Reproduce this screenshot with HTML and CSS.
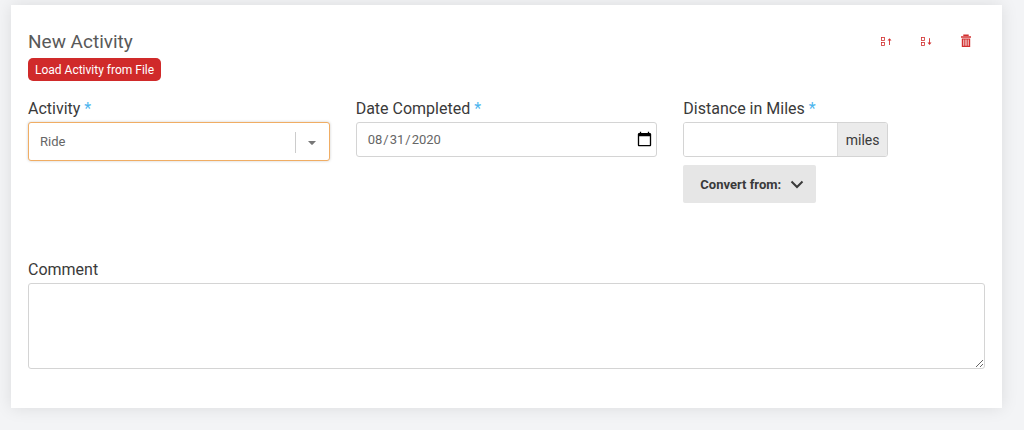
FILE: index.html
```html
<!DOCTYPE html>
<html lang="en">
<head>
<meta charset="utf-8">
<meta name="viewport" content="width=device-width, initial-scale=1">
<title>New Activity</title>
<link rel="stylesheet" href="styles.css">
</head>
<body>
<form class="card">
  <header class="card-header">
    <div class="heading">
      <h1 class="title">New Activity</h1>
      <button type="button" class="load-button">Load Activity from File</button>
    </div>
    <div class="actions">
      <button type="button" class="icon-button" aria-label="Move up">
        <svg width="14" height="12" viewBox="0 0 14 12" fill="none" stroke="currentColor" aria-hidden="true">
          <rect x="2.5" y="2.5" width="3" height="3" stroke-width=".8"/>
          <rect x="2.5" y="7.5" width="3" height="3" stroke-width=".8"/>
          <path d="M10.5 10V5" stroke-width=".9"/>
          <path d="M8.5 5.6l2-2.4 2 2.4z" fill="currentColor" stroke="none"/>
        </svg>
      </button>
      <button type="button" class="icon-button" aria-label="Move down">
        <svg width="14" height="12" viewBox="0 0 14 12" fill="none" stroke="currentColor" aria-hidden="true">
          <rect x="2.5" y="2.5" width="3" height="3" stroke-width=".8"/>
          <rect x="2.5" y="7.5" width="3" height="3" stroke-width=".8"/>
          <path d="M10.5 3.2v5" stroke-width=".9"/>
          <path d="M8.5 7.6l2 2.4 2-2.4z" fill="currentColor" stroke="none"/>
        </svg>
      </button>
      <button type="button" class="icon-button" aria-label="Delete">
        <svg width="12" height="14" viewBox="0 0 12 14" fill="none" stroke="currentColor" aria-hidden="true">
          <path d="M4 2V1.2h4V2M1 3h10" stroke-width="1.4"/>
          <path d="M2.4 5h7.2v7.4H2.4z" fill="currentColor" fill-opacity=".4" stroke-width="1.2"/>
          <path d="M4.7 5v7M7.3 5v7" stroke-width=".8"/>
        </svg>
      </button>
    </div>
  </header>

  <div class="fields">
    <div class="field">
      <label class="label" for="activity">Activity <span class="required">*</span></label>
      <div class="select-box">
        <select class="select" id="activity">
          <option>Ride</option>
        </select>
        <span class="select-indicator">
          <svg width="10" height="6" viewBox="0 0 10 6" fill="currentColor" aria-hidden="true"><path d="M1 1h8L5.5 4.8h-1z"/></svg>
        </span>
      </div>
    </div>
    <div class="field">
      <label class="label" for="date">Date Completed <span class="required">*</span></label>
      <input class="input date" type="date" id="date" value="2020-08-31">
    </div>
    <div class="field">
      <label class="label" for="distance">Distance in Miles <span class="required">*</span></label>
      <div class="input-group">
        <input class="distance" type="text" id="distance">
        <span class="unit">miles</span>
      </div>
      <button type="button" class="convert-button">Convert from:
        <svg width="14" height="10" viewBox="0 0 14 10" fill="none" stroke="currentColor" stroke-width="2" aria-hidden="true"><path d="M1.5 2.5L7 8l5.5-5.5"/></svg>
      </button>
    </div>
  </div>

  <div class="field">
    <label class="label" for="comment">Comment</label>
    <textarea class="input comment" id="comment"></textarea>
  </div>
</form>
</body>
</html>
```
FILE: styles.css
```css
* {
  box-sizing: border-box;
}

body {
  margin: 0;
  padding: 5px 22px 23px 11px;
  background: #f3f4f6;
  color: #3a3a3a;
  font-family: Roboto, "Liberation Sans", sans-serif;
  font-size: 16px;
}

button,
input,
select,
textarea {
  margin: 0;
  font-family: inherit;
}

.card {
  padding: 25px 17px 39px;
  background: #fff;
  box-shadow: 0 0 16px rgba(0, 0, 0, .1);
}

.card-header {
  display: flex;
  justify-content: space-between;
  align-items: flex-start;
}

.title {
  margin: 0 0 4px;
  color: #595959;
  font-size: 19px;
  font-weight: 400;
  line-height: 24px;
}

.load-button {
  display: block;
  height: 23px;
  padding: 0 7px;
  border: 0;
  border-radius: 5px;
  background: #d02a2a;
  color: #fff;
  font-size: 12px;
}

.actions {
  display: flex;
  gap: 20px;
  padding: 1px 9px 0 0;
}

.icon-button {
  display: grid;
  place-items: center;
  width: 20px;
  height: 20px;
  padding: 0;
  border: 0;
  background: none;
  color: #d22f2f;
}

.fields {
  display: grid;
  grid-template-columns: repeat(3, minmax(0, 1fr));
  gap: 26px;
  min-height: 179px;
  padding-top: 18px;
}

.label {
  display: block;
  margin-bottom: 3px;
  line-height: 20px;
}

.required {
  color: #4db5ee;
}

.input {
  display: block;
  width: 100%;
  border: 1px solid #d4d4d4;
  border-radius: 3px;
  background: #fff;
  color: #666;
  font-size: 13px;
}

.select-box {
  position: relative;
}

.select {
  display: block;
  width: 100%;
  height: 39px;
  padding: 0 48px 0 11px;
  appearance: none;
  border: 1px solid #f0ad64;
  border-radius: 3px;
  outline: 0;
  background: #fff;
  box-shadow: 0 0 3px rgba(0, 0, 0, .2);
  color: #666;
  font-size: 13px;
}

.select-indicator {
  position: absolute;
  top: 10px;
  right: 1px;
  bottom: 8px;
  display: grid;
  place-items: center;
  width: 34px;
  border-left: 1px solid #ccc;
  color: #777;
  pointer-events: none;
}

.date {
  height: 35px;
  padding: 0 1px 0 10px;
}

.date::-webkit-calendar-picker-indicator {
  width: 17px;
  height: 17px;
}

.input-group {
  display: flex;
  width: 68%;
  height: 35px;
  border: 1px solid #d4d4d4;
  border-radius: 3px;
  overflow: hidden;
}

.distance {
  flex: 1;
  min-width: 0;
  padding: 0 10px;
  border: 0;
  color: #666;
  font-size: 13px;
}

.unit {
  display: flex;
  align-items: center;
  padding: 0 8px;
  border-left: 1px solid #ddd;
  background: #ebebeb;
  font-size: 14px;
}

.convert-button {
  display: flex;
  align-items: center;
  gap: 9px;
  height: 38px;
  margin-top: 8px;
  padding: 0 12px 0 17px;
  border: 0;
  border-radius: 2px;
  background: #e6e6e6;
  color: #3a3a3a;
  font-size: 13px;
  font-weight: 700;
}

.comment {
  height: 86px;
  padding: 8px 10px;
  resize: vertical;
}
```
